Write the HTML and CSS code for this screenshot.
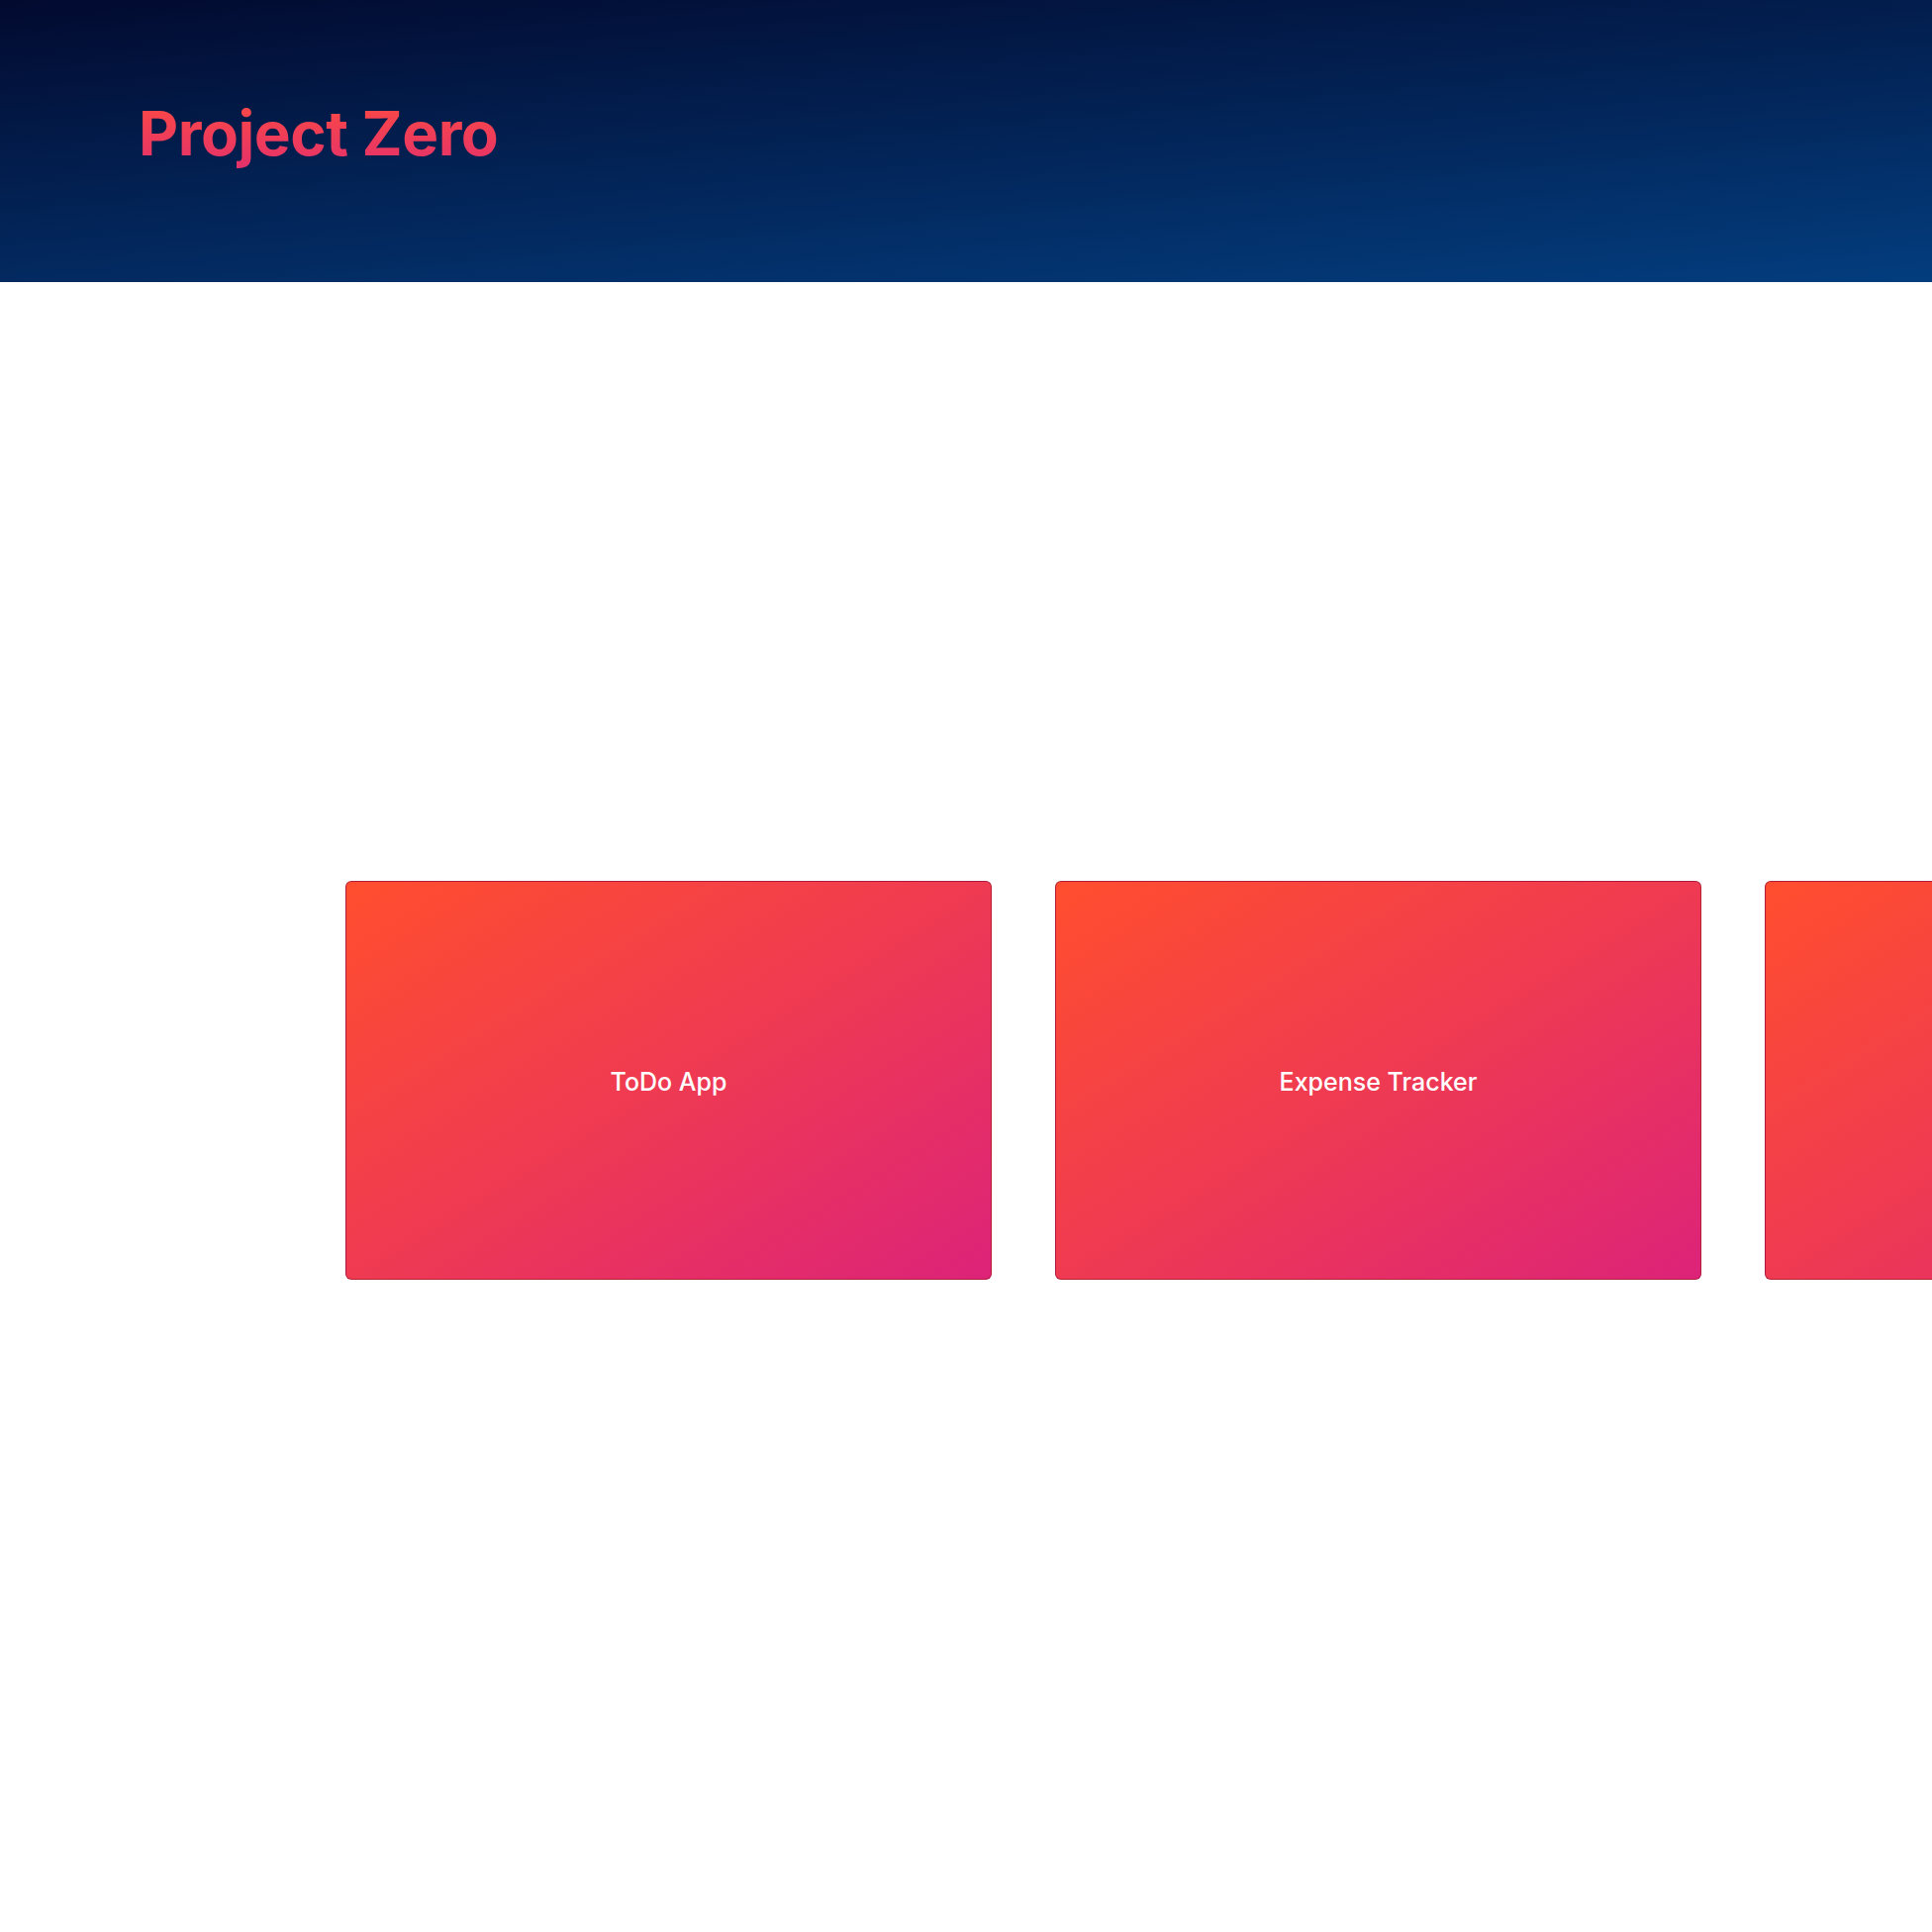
FILE: index.html
```html
<!DOCTYPE html>
<html lang="en">
<head>
<meta charset="utf-8">
<title>Project Zero</title>
<link rel="stylesheet" href="styles.css">
</head>
<body>
<header class="site-header">
  <h1 class="brand">Project Zero</h1>
</header>
<main class="projects">
  <div class="card-row">
    <a class="card" href="#">ToDo App</a>
    <a class="card" href="#">Expense Tracker</a>
    <a class="card" href="#" aria-label="More projects"></a>
  </div>
</main>
</body>
</html>
```

FILE: styles.css
```css
* { box-sizing: border-box; }
html, body {
  margin: 0;
  padding: 0;
  background: #ffffff;
  font-family: Inter, "Noto Sans", "Liberation Sans", sans-serif;
  overflow: hidden;
}
.site-header {
  height: 285px;
  padding: 97px 0 0 140px;
  background: linear-gradient(175deg, #020a2f 0%, #033d7e 100%);
}
.brand {
  margin: 0;
  font-size: 62px;
  font-weight: 700;
  line-height: normal;
  letter-spacing: -0.5px;
  display: inline-block;
  background: linear-gradient(to bottom, #f8464a 20%, #e3306c 100%);
  -webkit-background-clip: text;
  background-clip: text;
  color: transparent;
}
.projects {
  padding: 605px 0 0 349px;
}
.card-row {
  display: flex;
  gap: 64px;
  width: max-content;
}
.card {
  width: 653px;
  height: 403px;
  flex: none;
  display: flex;
  align-items: center;
  justify-content: center;
  padding-top: 2px;
  border: 1px solid rgba(160, 20, 50, 0.75);
  border-radius: 6px;
  background: linear-gradient(to bottom right, #ff4e2e 0%, #ef3a52 50%, #dc2379 100%);
  color: #ffffff;
  text-decoration: none;
  font-size: 25px;
  font-weight: 500;
}
```
